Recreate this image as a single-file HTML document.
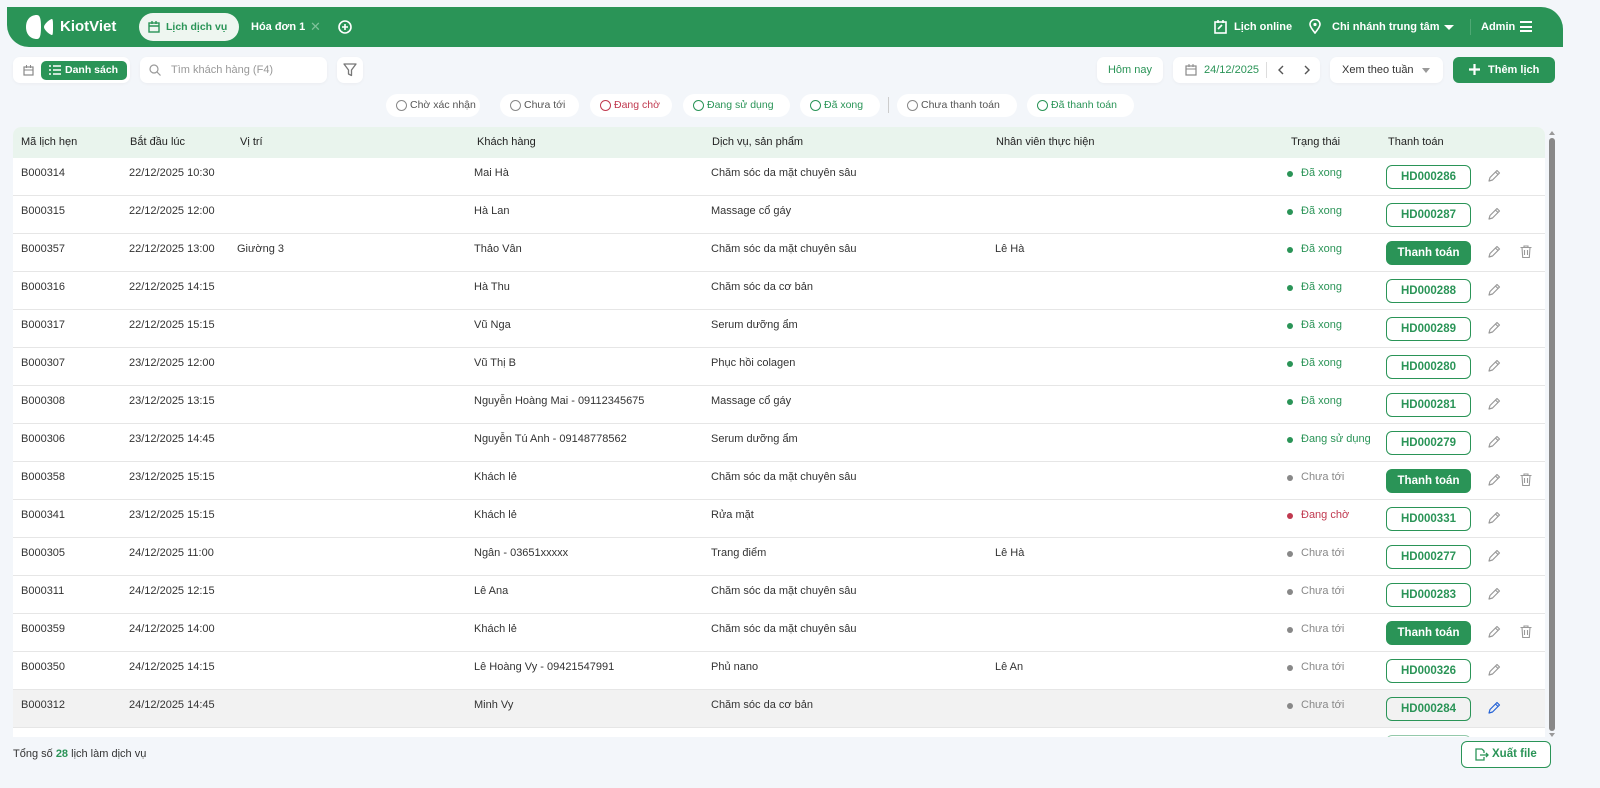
<!DOCTYPE html>
<html><head><meta charset="utf-8"><style>
*{box-sizing:border-box;margin:0;padding:0}
body{width:1600px;height:788px;overflow:hidden;background:#f3f6fa;font-family:"Liberation Sans",sans-serif;font-size:12px;color:#333;position:relative;white-space:nowrap}
.abs{position:absolute}
.hdr{left:7px;top:7px;width:1556px;height:40px;background:#2a9457;border-radius:0 22px 0 22px;color:#fff}
.hdr .t{position:absolute;font-weight:bold;font-size:11px;top:14px}
.card{background:#fff;border-radius:7px;box-shadow:0 1px 3px rgba(0,0,0,.04)}
.chip{position:absolute;top:94px;height:23px;background:#fff;border-radius:12px;font-size:10.5px;line-height:23px;padding-left:24px;color:#555}
.chip:before{content:"";position:absolute;left:10px;top:6px;width:9px;height:9px;border:1px solid #888;border-radius:50%}
.chip.r:before{border-color:#c0394f}.chip.g:before{border-color:#2a9457}
.tbl{left:13px;top:127px;width:1532px;height:610px;background:#fff;border-radius:8px 8px 0 0;overflow:hidden}
.th{position:absolute;left:0;top:0;width:1532px;height:31px;background:#e9f4ed}
.th span{position:absolute;top:9px;font-size:11px;color:#222}
.row{position:absolute;left:0;width:1532px;height:38px;border-bottom:1px solid #e6e6e6}
.row span{position:absolute;top:9px;font-size:11px;color:#333}
.st{padding-left:14px}
.st:before{content:"";position:absolute;left:0;top:4px;width:6px;height:6px;border-radius:50%;background:currentColor}
.btn{position:absolute;left:1373px;top:7px;width:85px;height:24px;border:1px solid #2a9457;border-radius:6px;color:#2a9457;font-weight:bold;font-size:11.5px;text-align:center;line-height:22px}
.btn.f{background:#2a9457;color:#fff}
.pen{position:absolute;left:1474px;top:11px}
.tr{position:absolute;left:1507px;top:11px}
</style></head><body>
<div class="abs hdr">
 <svg class="abs" style="left:19px;top:8px" width="28" height="24" viewBox="0 0 28 24"><path d="M11 0C4 0 0 5 0 12s4 12 11 12c3 0 4-4 4-12S14 0 11 0z" fill="#fff"/><path d="M26 4c-2 0-8 5-8 8s6 8 8 8c1 0 1-4 1-8s0-8-1-8z" fill="#fff"/></svg>
 <div class="t" style="left:53px;top:11px;font-size:15px">KiotViet</div>
 <div class="abs" style="left:132px;top:6px;width:100px;height:28px;background:#eef6f0;border-radius:14px;color:#2a9457;font-weight:bold;font-size:10.5px;line-height:28px;padding-left:27px">Lịch dịch vụ</div>
 <svg class="abs" style="left:141px;top:14px" width="12" height="12"><rect x="1" y="2" width="10" height="9" fill="none" stroke="#2a9457" stroke-width="1.4"/><path d="M1 5h10M4 0v3M8 0v3" stroke="#2a9457" stroke-width="1.4"/></svg>
 <div class="t" style="left:244px">Hóa đơn 1</div>
 <div class="t" style="left:303px;color:#7fc29a;font-weight:normal;top:12px;font-size:13px">✕</div>
 <svg class="abs" style="left:331px;top:13px" width="14" height="14"><circle cx="7" cy="7" r="6" fill="none" stroke="#fff" stroke-width="1.6"/><path d="M7 4v6M4 7h6" stroke="#fff" stroke-width="1.6"/></svg>
 <svg class="abs" style="left:1207px;top:13px" width="13" height="14"><rect x="1" y="2" width="11" height="11" fill="none" stroke="#fff" stroke-width="1.6"/><path d="M4 0v3M9 0v3M4 9l4-4" stroke="#fff" stroke-width="1.6"/></svg>
 <div class="t" style="left:1227px">Lịch online</div>
 <svg class="abs" style="left:1302px;top:12px" width="12" height="15"><path d="M6 14C2 9 1 7 1 5.5a5 5 0 0110 0C11 7 10 9 6 14z" fill="none" stroke="#fff" stroke-width="1.6"/><circle cx="6" cy="5.5" r="1.6" fill="#fff"/></svg>
 <div class="t" style="left:1325px">Chi nhánh trung tâm</div>
 <div class="abs" style="left:1437px;top:18px;border:5px solid transparent;border-top:5px solid #fff"></div>
 <div class="abs" style="left:1463px;top:12px;width:1px;height:16px;background:#4fa874"></div>
 <div class="t" style="left:1474px">Admin</div>
 <div class="abs" style="left:1513px;top:14px;width:12px;height:11px;border-top:2px solid #fff;border-bottom:2px solid #fff"><div style="margin-top:2.5px;height:2px;background:#fff"></div></div>
</div>

<div class="abs card" style="left:13px;top:57px;width:117px;height:26px"></div>
<svg class="abs" style="left:23px;top:65px" width="11" height="11"><rect x="1" y="2" width="9" height="8" fill="none" stroke="#888" stroke-width="1.2"/><path d="M1 5h9M3.5 0v3M7.5 0v3" stroke="#888"/></svg>
<div class="abs" style="left:41px;top:61px;width:86px;height:19px;background:#2a9457;border-radius:5px;color:#fff;font-weight:bold;font-size:10.5px;line-height:19px;padding-left:24px">Danh sách</div>
<svg class="abs" style="left:49px;top:65px" width="12" height="10"><path d="M0 1h2M0 5h2M0 9h2M4 1h8M4 5h8M4 9h8" stroke="#fff" stroke-width="1.6"/></svg>
<div class="abs card" style="left:140px;top:57px;width:187px;height:26px;color:#999;font-size:11px;line-height:26px;padding-left:31px">Tìm khách hàng (F4)</div>
<svg class="abs" style="left:149px;top:64px" width="12" height="12"><circle cx="5" cy="5" r="4" fill="none" stroke="#999" stroke-width="1.2"/><path d="M8 8l3.5 3.5" stroke="#999" stroke-width="1.2"/></svg>
<div class="abs card" style="left:337px;top:57px;width:26px;height:26px"></div>
<svg class="abs" style="left:343px;top:63px" width="14" height="14"><path d="M1 1h12L8.5 7v5.5l-3-1.5V7z" fill="none" stroke="#777" stroke-width="1.3" stroke-linejoin="round"/></svg>

<div class="abs card" style="left:1097px;top:57px;width:66px;height:26px;color:#2a9457;font-size:11px;line-height:26px;text-align:center">Hôm nay</div>
<div class="abs card" style="left:1173px;top:57px;width:147px;height:26px;color:#2a9457;font-size:11px;line-height:26px;padding-left:31px">24/12/2025</div>
<svg class="abs" style="left:1185px;top:64px" width="12" height="12"><rect x="1" y="2" width="10" height="9" fill="none" stroke="#888" stroke-width="1.2"/><path d="M1 5h10M4 0v3M8 0v3" stroke="#888"/></svg>
<div class="abs" style="left:1266px;top:62px;width:1px;height:16px;background:#ddd"></div>
<svg class="abs" style="left:1276px;top:64px" width="40" height="12"><path d="M7 2L3 6l4 4M29 2l4 4-4 4" fill="none" stroke="#555" stroke-width="1.4"/></svg>
<div class="abs card" style="left:1330px;top:57px;width:113px;height:26px;color:#333;font-size:11px;line-height:26px;padding-left:12px">Xem theo tuần</div>
<div class="abs" style="left:1422px;top:68px;border:4px solid transparent;border-top:5px solid #999"></div>
<div class="abs" style="left:1453px;top:57px;width:102px;height:26px;background:#2a9457;border-radius:6px;color:#fff;font-weight:bold;font-size:11px;line-height:26px;padding-left:35px">Thêm lịch</div>
<svg class="abs" style="left:1469px;top:64px" width="11" height="11"><path d="M5.5 0v11M0 5.5h11" stroke="#fff" stroke-width="2.2"/></svg>

<div class="chip" style="left:386px;width:94px">Chờ xác nhận</div>
<div class="chip" style="left:500px;width:79px">Chưa tới</div>
<div class="chip r" style="left:590px;width:82px;color:#c0394f">Đang chờ</div>
<div class="chip g" style="left:683px;width:107px;color:#2a9457">Đang sử dụng</div>
<div class="chip g" style="left:800px;width:80px;color:#2a9457">Đã xong</div>
<div class="abs" style="left:888px;top:97px;width:1px;height:16px;background:#ccc"></div>
<div class="chip" style="left:897px;width:120px">Chưa thanh toán</div>
<div class="chip g" style="left:1027px;width:107px;color:#2a9457">Đã thanh toán</div>

<div class="abs tbl">
<div class="th"><span style="left:8px">Mã lịch hẹn</span><span style="left:117px">Bắt đầu lúc</span><span style="left:227px">Vị trí</span><span style="left:464px">Khách hàng</span><span style="left:699px">Dịch vụ, sản phẩm</span><span style="left:983px">Nhân viên thực hiện</span><span style="left:1278px">Trạng thái</span><span style="left:1375px">Thanh toán</span></div>
<div id="rows"></div>
</div>
<div class="abs" style="left:1549px;top:128px;border:3px solid transparent;border-bottom:4px solid #999"></div>
<div class="abs" style="left:1549px;top:138px;width:6px;height:593px;background:#888;border-radius:3px"></div>
<div class="abs" style="left:1549px;top:733px;border:3px solid transparent;border-top:4px solid #999"></div>

<div class="abs" style="left:13px;top:748px;font-size:11px;color:#333">Tổng số <b style="color:#2a9457">28</b> lịch làm dịch vụ</div>
<div class="abs" style="left:1461px;top:741px;width:90px;height:27px;border:1px solid #2a9457;border-radius:6px;background:#fff;color:#2a9457;font-weight:bold;font-size:11.5px;line-height:25px;padding-left:30px">Xuất file</div>
<svg class="abs" style="left:1475px;top:748px" width="14" height="13"><path d="M7 1H1v11h8V9M7 1l2 2v2M5 7h8M11 5l2 2-2 2" fill="none" stroke="#2a9457" stroke-width="1.3"/></svg>

<script>
var d=[
["B000314","22/12/2025 10:30","","Mai Hà","Chăm sóc da mặt chuyên sâu","","Đã xong","HD000286"],
["B000315","22/12/2025 12:00","","Hà Lan","Massage cổ gáy","","Đã xong","HD000287"],
["B000357","22/12/2025 13:00","Giường 3","Thảo Vân","Chăm sóc da mặt chuyên sâu","Lê Hà","Đã xong",""],
["B000316","22/12/2025 14:15","","Hà Thu","Chăm sóc da cơ bản","","Đã xong","HD000288"],
["B000317","22/12/2025 15:15","","Vũ Nga","Serum dưỡng ẩm","","Đã xong","HD000289"],
["B000307","23/12/2025 12:00","","Vũ Thị B","Phục hồi colagen","","Đã xong","HD000280"],
["B000308","23/12/2025 13:15","","Nguyễn Hoàng Mai - 09112345675","Massage cổ gáy","","Đã xong","HD000281"],
["B000306","23/12/2025 14:45","","Nguyễn Tú Anh - 09148778562","Serum dưỡng ẩm","","Đang sử dụng","HD000279"],
["B000358","23/12/2025 15:15","","Khách lẻ","Chăm sóc da mặt chuyên sâu","","Chưa tới",""],
["B000341","23/12/2025 15:15","","Khách lẻ","Rửa mặt","","Đang chờ","HD000331"],
["B000305","24/12/2025 11:00","","Ngân - 03651xxxxx","Trang điểm","Lê Hà","Chưa tới","HD000277"],
["B000311","24/12/2025 12:15","","Lê Ana","Chăm sóc da mặt chuyên sâu","","Chưa tới","HD000283"],
["B000359","24/12/2025 14:00","","Khách lẻ","Chăm sóc da mặt chuyên sâu","","Chưa tới",""],
["B000350","24/12/2025 14:15","","Lê Hoàng Vy - 09421547991","Phủ nano","Lê An","Chưa tới","HD000326"],
["B000312","24/12/2025 14:45","","Minh Vy","Chăm sóc da cơ bản","","Chưa tới","HD000284"],
["","","","","","","",""]];
var col={"Đã xong":"#2a9457","Đang sử dụng":"#2a9457","Chưa tới":"#888","Đang chờ":"#c0394f"};
var h="";
d.forEach(function(r,i){
 var top=31+i*38, hov=i==14;
 h+='<div class="row" style="top:'+top+'px;'+(hov?'background:#f2f2f2':'')+'">';
 if(r[0]){
 h+='<span style="left:8px">'+r[0]+'</span><span style="left:116px">'+r[1]+'</span><span style="left:224px">'+r[2]+'</span><span style="left:461px">'+r[3]+'</span><span style="left:698px">'+r[4]+'</span><span style="left:982px">'+r[5]+'</span>';
 h+='<span class="st" style="left:1274px;color:'+col[r[6]]+'">'+r[6]+'</span>';
 h+= r[7]?'<div class="btn">'+r[7]+'</div>':'<div class="btn f">Thanh toán</div>';
 var pc=hov?'#2563d6':'#999';
 h+='<svg class="pen" width="14" height="14"><path d="M2 12l1-3.5L10 1.5l2.5 2.5-7 7z M8.5 3l2.5 2.5" fill="none" stroke="'+pc+'" stroke-width="1.2" stroke-linejoin="round"/></svg>';
 if(!r[7]) h+='<svg class="tr" width="12" height="13"><path d="M0.5 2.5h11M4 2.5V1h4v1.5M2 2.5l.7 10h6.6l.7-10M4.5 5v5M7.5 5v5" fill="none" stroke="#999" stroke-width="1.1"/></svg>';
 } else h+='<div class="btn" style="top:7px;opacity:.5"></div>';
 h+='</div>';
});
document.getElementById('rows').innerHTML=h;
</script>
</body></html>
